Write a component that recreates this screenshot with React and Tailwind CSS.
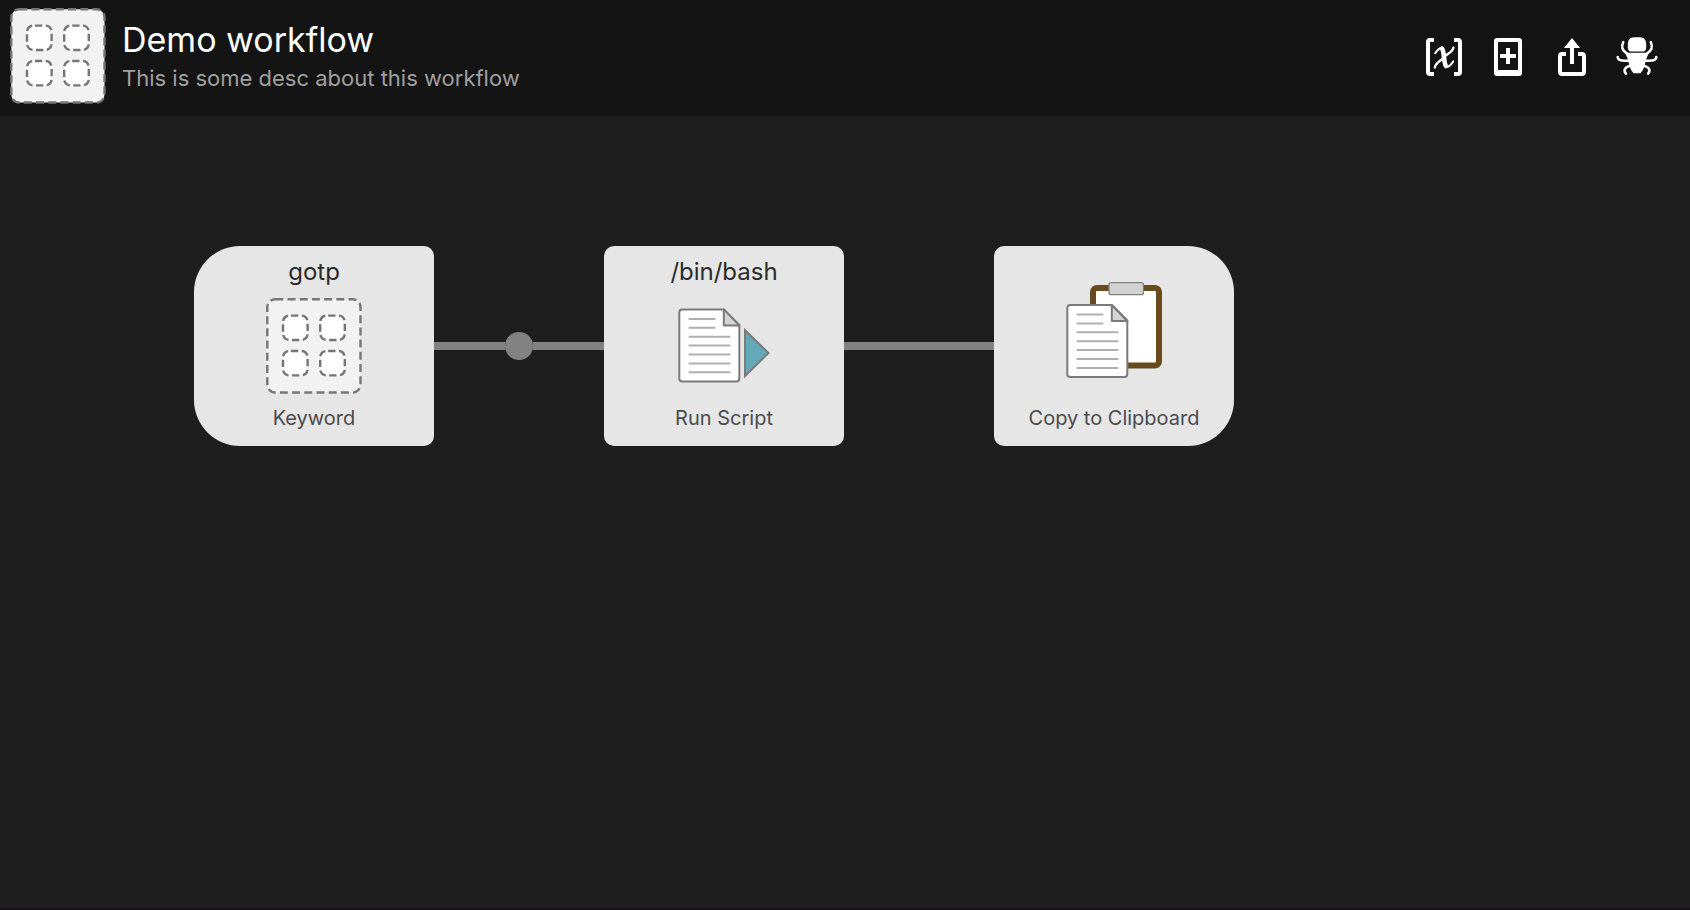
import React from 'react';
import clsx from 'clsx';

// Placeholder icon shared by the header and the keyword node
const GridIcon = () => {
  const cells = [
    [17, 17.6],
    [54.2, 17.6],
    [17, 53],
    [54.2, 53]
  ];

  return (
    <svg viewBox="0 0 96 96" fill="none" stroke="#757575" strokeWidth="2.4" className="size-24 shrink-0" aria-hidden="true">
      <rect x="1.3" y="1.3" width="93.2" height="93.2" rx="8" fill="#f2f2f2" strokeDasharray="8 4.2" />
      {cells.map(([x, y]) => (
        <rect key={`${x}-${y}`} x={x} y={y} width="24.6" height="24.4" rx="6.5" fill="#fff" strokeDasharray="7.3 3.5" strokeDashoffset="-1.5" />
      ))}
    </svg>
  );
};

const Sheet = ({ x, y }) => (
  <g transform={`translate(${x} ${y})`}>
    <path d="M3 0H44.5L60 15.5V69a3 3 0 0 1-3 3H3a3 3 0 0 1-3-3V3a3 3 0 0 1 3-3Z" fill="#fff" stroke="#7a7a7a" strokeWidth="2" />
    <path d="M44.5 0V16H60Z" fill="#d4d4d4" stroke="#7a7a7a" strokeWidth="2" strokeLinejoin="round" />
    <path d="M9.3 9.5H36M9.3 18.4H36M9.3 27.3H51M9.3 36.2H51M9.3 45.1H51M9.3 54H51M9.3 62.9H51" stroke="#b0b0b0" strokeWidth="2" />
  </g>
);

const ScriptIcon = () => (
  <svg viewBox="0 0 96 96" fill="none" className="size-24 shrink-0" aria-hidden="true">
    <Sheet x={3.3} y={11.4} />
    <path d="M69 32.2V78L92.5 55Z" fill="#64a9bb" stroke="#7a7a7a" strokeWidth="2" />
  </svg>
);

const ClipboardIcon = () => (
  <svg viewBox="0 0 96 96" fill="none" className="size-24 shrink-0" aria-hidden="true">
    <rect x="27" y="6" width="66" height="77.6" rx="4" fill="#fff" stroke="#684b1d" strokeWidth="6" />
    <rect x="43" y="0.7" width="34.4" height="12" rx="2" fill="#d2d2d2" stroke="#808080" strokeWidth="1.3" />
    <Sheet x={1.3} y={23} />
  </svg>
);

const VariableIcon = () => (
  <svg viewBox="0 0 40 40" fill="none" stroke="currentColor" className="size-10" aria-hidden="true">
    <path d="M10 2H6a2 2 0 0 0-2 2v30a2 2 0 0 0 2 2h4M30 2h4a2 2 0 0 1 2 2v30a2 2 0 0 1-2 2h-4" strokeWidth="4" />
    <path d="M11.2 15.2C13 12.6 15 10.2 17.6 9.8" strokeWidth="2" strokeLinecap="round" />
    <path d="M18 10.6C20.5 13 19.4 24.500 22 28" strokeWidth="4.6" strokeLinecap="round" />
    <path d="M22.5 29C25 28.600 27.600 26 29.200 23.400" strokeWidth="2" strokeLinecap="round" />
    <path d="M29.400 9.700C28.400 14.500 23 15.500 20 19.200C17 23 11.600 24.500 10.800 29.500" strokeWidth="2.300" strokeLinecap="round" />
  </svg>
);

const AddIcon = () => (
  <svg viewBox="0 0 40 40" fill="currentColor" className="size-10" aria-hidden="true">
    <path fillRule="evenodd" d="M9 0h22a3 3 0 0 1 3 3v32a3 3 0 0 1-3 3H9a3 3 0 0 1-3-3V3a3 3 0 0 1 3-3Zm1 4v28h20V4Z" />
    <path d="M18 10h4v6h6v4h-6v6h-4v-6h-6v-4h6Z" />
  </svg>
);

const ShareIcon = () => (
  <svg viewBox="0 0 40 40" fill="none" className="size-10" aria-hidden="true">
    <path d="M14 16H10a2 2 0 0 0-2 2v16a2 2 0 0 0 2 2h20a2 2 0 0 0 2-2V18a2 2 0 0 0-2-2h-4" stroke="currentColor" strokeWidth="4" />
    <path d="M20 0l8 10h-6v16h-4V10h-6Z" fill="currentColor" />
  </svg>
);

const BugIcon = () => {
  const legs = 'M7.2 4.2C5.4 8 5 11.500 11 15.500M1.700 19C2 22.500 5 23.200 13 22.600M9.800 35.600C7.500 32.500 8 28.600 16 27.500';

  return (
    <svg viewBox="0 0 40 40" fill="none" className="size-10 overflow-visible" aria-hidden="true">
      <path d="M11.800 7C11.800 2 14-.7 18-.7h6c4 0 6.200 2.700 6.200 7.700v2.400c0 2.700-1.300 4.200-4 4.200H15.800c-2.700 0-4-1.500-4-4.200Z" fill="currentColor" />
      <path d="M9.300 14.800h23.400C32 17.500 30.600 19.500 29.800 22.500c-1.200 5-2 9.500-5.300 12.800h-7C14.200 32 13.400 27.500 12.200 22.500c-.8-3-2.200-5-2.900-7.700Z" fill="currentColor" />
      <g stroke="currentColor" strokeWidth="2.600" strokeLinecap="round">
        <path d={legs} />
        <path d={legs} transform="translate(42 0) scale(-1 1)" />
      </g>
    </svg>
  );
};

const actions = [
  { label: 'Workflow variables', Icon: VariableIcon },
  { label: 'Add object', Icon: AddIcon },
  { label: 'Share workflow', Icon: ShareIcon },
  { label: 'Toggle debugger', Icon: BugIcon }
];

const Node = ({ title, label, shape, children }) => (
  <article className={clsx('flex h-[200px] w-60 shrink-0 flex-col items-center bg-[#e6e6e6]', shape)}>
    {title ? (
      <h2 className="mt-2 mb-2 text-2xl leading-9 text-[#2b2b2b]">{title}</h2>
    ) : (
      <div className="h-9 shrink-0" />
    )}
    {children}
    <p className="mt-auto mb-3.5 text-xl leading-7 text-[#4b4b4b]">{label}</p>
  </article>
);

const App = () => {
  return (
    <div className="flex min-h-screen flex-col border-b-2 border-[#1a1218] bg-[#1e1e1e] font-['Inter','Liberation_Sans',sans-serif]">
      <header className="flex items-center justify-between border-b border-[#1b1b1b] bg-[#141414] pt-2 pr-[34px] pb-3 pl-[10px]">
        <div className="flex items-center gap-4">
          <GridIcon />
          <div className="pt-1">
            <h1 className="text-[34px] leading-10 text-white">Demo workflow</h1>
            <p className="text-[22px] leading-9 text-[#a0a0a0]">This is some desc about this workflow</p>
          </div>
        </div>
        <div className="flex items-center gap-6 pt-1 text-white">
          {actions.map(({ label, Icon }) => (
            <button key={label} type="button" aria-label={label} title={label}>
              <Icon />
            </button>
          ))}
        </div>
      </header>

      <main className="flex flex-1 items-start overflow-x-auto pt-[129px] pl-[194px]">
        <Node title="gotp" label="Keyword" shape="rounded-l-[46px] rounded-r-[10px]">
          <GridIcon />
        </Node>
        <div className="flex h-[200px] w-[170px] shrink-0 items-center">
          <div className="h-2 flex-1 bg-[#828282]" />
          <div className="size-7 rounded-full bg-[#828282]" />
          <div className="h-2 flex-1 bg-[#828282]" />
        </div>
        <Node title="/bin/bash" label="Run Script" shape="rounded-[10px]">
          <ScriptIcon />
        </Node>
        <div className="flex h-[200px] w-[150px] shrink-0 items-center">
          <div className="h-2 flex-1 bg-[#828282]" />
        </div>
        <Node label="Copy to Clipboard" shape="rounded-l-[10px] rounded-r-[46px]">
          <ClipboardIcon />
        </Node>
      </main>
    </div>
  );
};

export default App;
